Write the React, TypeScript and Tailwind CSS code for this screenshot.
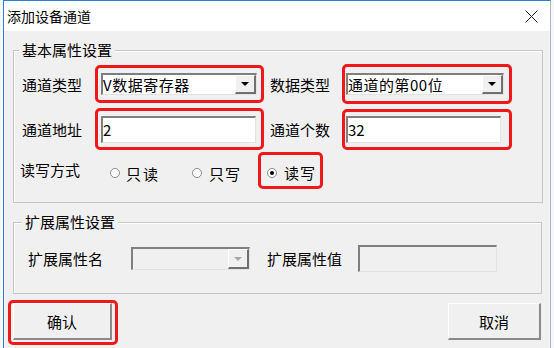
import React from "react";

function Tri({ gray }: { gray?: boolean }) {
  return (
    <div
      className={
        gray
          ? "w-0 h-0 border-l-[4px] border-r-[4px] border-t-[4px] border-l-transparent border-r-transparent border-t-[#a8a8a8]"
          : "w-0 h-0 border-l-[4px] border-r-[4px] border-t-[4px] border-l-transparent border-r-transparent border-t-black"
      }
    />
  );
}

function DropBtn({ gray }: { gray?: boolean }) {
  return (
    <div className="w-[21px] h-full bg-[#f0f0f0] border-t border-l border-t-white border-l-white border-r-2 border-b-2 border-r-[#707070] border-b-[#707070] flex items-center justify-center">
      <Tri gray={gray} />
    </div>
  );
}

function Radio({ checked }: { checked?: boolean }) {
  return (
    <span className="w-[10px] h-[10px] rounded-full bg-white border border-[#8a8a8a] flex items-center justify-center shrink-0">
      {checked && <span className="w-[4px] h-[4px] rounded-full bg-black" />}
    </span>
  );
}

const sunken =
  "border-t-2 border-l-2 border-t-[#7f7f7f] border-l-[#7f7f7f] border-r border-b border-r-[#e3e3e3] border-b-[#e3e3e3]";

export default function App() {
  return (
    <div className="w-[554px] h-[348px] bg-[#f7f7f7] overflow-hidden font-['Noto_Sans_CJK_SC',sans-serif] text-black">
      <div className="ml-[3px] w-[548px] h-[348px] border-l border-t border-r border-l-[#2b7fd6] border-t-[#2b7fd6] border-r-[#a9b9c9] flex flex-col bg-[#f0f0f0]">
        {/* title bar */}
        <div className="h-[30px] bg-white flex items-center pl-[3px] shrink-0">
          <span className="text-[14px] leading-none">添加设备通道</span>
          <svg className="ml-auto mr-[12px]" width="13" height="13" viewBox="0 0 13 13">
            <path d="M0.5 0.5L12.5 12.5M12.5 0.5L0.5 12.5" stroke="#222" strokeWidth="1" />
          </svg>
        </div>

        {/* group 1 */}
        <div className="relative mt-[19px] ml-[9px] w-[530px] h-[153px] border border-[#c6c6c6] shadow-[inset_1px_1px_0_#ffffff] flex flex-col pt-[13px] shrink-0">
          <span className="absolute left-[5px] top-[-11px] px-[3px] bg-[#f0f0f0] text-[15px] leading-[20px]">基本属性设置</span>

          {/* row 1 */}
          <div className="flex items-center h-[40px]">
            <div className="w-[81px] pl-[8px] text-[15px] leading-none">通道类型</div>
            <div className="w-[169px] h-[38px] border-[3px] border-[#f01818] rounded-[5px] flex items-center pl-[3px]">
              <div className={"w-[156px] h-[22px] bg-white flex " + sunken}>
                <span className="flex-1 flex items-center text-[15px] leading-none tracking-[0.5px]">V数据寄存器</span>
                <DropBtn />
              </div>
            </div>
            <div className="w-[78px] pl-[6px] text-[15px] leading-none">数据类型</div>
            <div className="w-[170px] h-[40px] border-[3px] border-[#f01818] rounded-[5px] flex items-center pl-[1px]">
              <div className={"w-[158px] h-[22px] bg-white flex " + sunken}>
                <span className="flex-1 flex items-center text-[15px] leading-none tracking-[0.5px]">通道的第00位</span>
                <DropBtn />
              </div>
            </div>
          </div>

          {/* row 2 */}
          <div className="flex items-center h-[42px] mt-[4px]">
            <div className="w-[81px] pl-[8px] text-[15px] leading-none">通道地址</div>
            <div className="w-[169px] h-[42px] border-[3px] border-[#f01818] rounded-[5px] flex items-center pl-[3px]">
              <div className={"w-[155px] h-[27px] bg-white flex items-center text-[15px] leading-none " + sunken}>2</div>
            </div>
            <div className="w-[78px] pl-[6px] text-[15px] leading-none">通道个数</div>
            <div className="w-[170px] h-[41px] border-[3px] border-[#f01818] rounded-[5px] flex items-center pl-[1px]">
              <div className={"w-[155px] h-[27px] bg-white flex items-center text-[15px] leading-none " + sunken}>32</div>
            </div>
          </div>

          {/* row 3 */}
          <div className="flex items-center h-[37px] mt-[2px]">
            <div className="w-[96px] pl-[6px] text-[15px] leading-none mb-[2px]">读写方式</div>
            <div className="w-[82px] flex items-center gap-[6px] mt-[5px]">
              <Radio />
              <span className="text-[15px] leading-none tracking-[2px]">只读</span>
            </div>
            <div className="w-[66px] flex items-center gap-[7px] mt-[5px]">
              <Radio />
              <span className="text-[15px] leading-none tracking-[1px]">只写</span>
            </div>
            <div className="w-[65px] h-[37px] border-[3px] border-[#f01818] rounded-[5px] flex items-center pl-[6px]">
              <div className="flex items-center gap-[7px] mt-[4px]">
                <Radio checked />
                <span className="text-[15px] leading-none tracking-[1px]">读写</span>
              </div>
            </div>
          </div>
        </div>

        {/* group 2 */}
        <div className="relative mt-[19px] ml-[9px] w-[529px] h-[72px] border border-[#c6c6c6] shadow-[inset_1px_1px_0_#ffffff] flex flex-col pt-[22px] shrink-0">
          <span className="absolute left-[8px] top-[-11px] px-[3px] bg-[#f0f0f0] text-[15px] leading-[20px]">扩展属性设置</span>
          <div className="flex items-center h-[27px]">
            <div className="w-[117px] pl-[14px] text-[15px] leading-none">扩展属性名</div>
            <div className={"w-[119px] h-[23px] bg-[#f0f0f0] flex justify-end " + sunken}>
              <DropBtn gray />
            </div>
            <div className="w-[108px] pl-[17px] text-[15px] leading-none">扩展属性值</div>
            <div className={"w-[139px] h-[27px] bg-[#f0f0f0] " + sunken} />
          </div>
        </div>

        {/* buttons */}
        <div className="flex items-start mt-[6px] pl-[4px]">
          <div className="w-[110px] h-[45px] border-[3px] border-[#f01818] rounded-[5px] pl-[2px]">
            <div className="w-[99px] h-[37px] bg-[#f0f0f0] border-t border-l border-t-white border-l-white border-r-2 border-b-2 border-r-[#8a8a8a] border-b-[#8a8a8a] flex items-center justify-center text-[15px] leading-none">
              确认
            </div>
          </div>
          <div className="ml-auto mr-[9px] mt-[3px] w-[93px] h-[37px] bg-[#f0f0f0] border-t border-l border-t-white border-l-white border-r-2 border-b-2 border-r-[#8a8a8a] border-b-[#8a8a8a] flex items-center justify-center text-[15px] leading-none">
            取消
          </div>
        </div>
      </div>
    </div>
  );
}
